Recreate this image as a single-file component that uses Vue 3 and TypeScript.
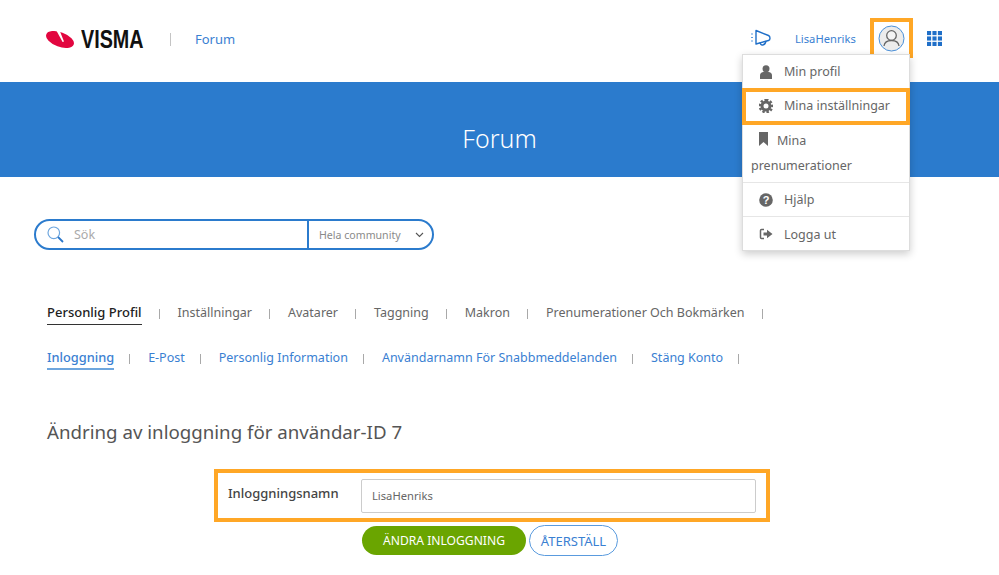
<script setup lang="ts">
const mainTabs: string[] = ['Inställningar', 'Avatarer', 'Taggning', 'Makron', 'Prenumerationer Och Bokmärken']
const subTabs: string[] = ['E-Post', 'Personlig Information', 'Användarnamn För Snabbmeddelanden', 'Stäng Konto']
</script>

<template>
  <div class="page">
    <header class="header">
      <div class="brand">
        <svg class="logo-mark" width="28" height="19" viewBox="0 0 28 19">
          <ellipse cx="14" cy="9.500" rx="14.600" ry="7.300" transform="rotate(20 14 9.500)" fill="#e2063f" />
          <path fill="#fff" d="M9.500 -1 13 -1 18 11.500 16.600 12Z" />
        </svg>
        <span class="logo-text">VISMA</span>
        <span class="brand-sep"></span>
        <span class="brand-link">Forum</span>
      </div>
      <div class="tools">
        <svg class="horn" width="21" height="18" viewBox="0 0 21 18" fill="none">
          <path stroke="#1f6fc8" stroke-width="1.400" stroke-linejoin="round" d="M6 1.500 18.500 6.500C20.500 7.500 20.500 11 18.500 11.500L6 15Z" />
          <path stroke="#1f6fc8" stroke-width="1.400" d="M10 13.500c.5 3.500 5 3.500 6-1.500" />
          <path stroke="#5b9ce0" stroke-width="1.200" d="M1 5h2M1 8.500h2M1 12h2" />
        </svg>
        <span class="user-name">LisaHenriks</span>
        <span class="avatar-box">
          <svg width="27" height="27" viewBox="0 0 27 27" fill="none">
            <circle cx="13.500" cy="13.500" r="12.500" fill="#ececec" stroke="#4a90d9" />
            <circle cx="13.500" cy="10.500" r="4.800" fill="#f4f4f4" stroke="#666" stroke-width="1.300" />
            <path stroke="#666" stroke-width="1.300" d="M6 21c.5-4 3.500-5.500 7.500-5.500S20.500 17 21 21" />
          </svg>
        </span>
        <svg class="grid-icon" width="15" height="15" viewBox="0 0 16 16" fill="#1f6fc8">
          <rect width="4.400" height="4.400" /><rect x="5.800" width="4.400" height="4.400" /><rect x="11.600" width="4.400" height="4.400" />
          <rect y="5.800" width="4.400" height="4.400" /><rect x="5.800" y="5.800" width="4.400" height="4.400" /><rect x="11.600" y="5.800" width="4.400" height="4.400" />
          <rect y="11.600" width="4.400" height="4.400" /><rect x="5.800" y="11.600" width="4.400" height="4.400" /><rect x="11.600" y="11.600" width="4.400" height="4.400" />
        </svg>
      </div>
    </header>

    <section class="hero">Forum</section>

    <main class="content">
      <div class="search">
        <div class="search-field">
          <svg width="17" height="17" viewBox="0 0 17 17" fill="none">
            <circle cx="6.800" cy="6.800" r="5.800" stroke="#6ea6de" stroke-width="1.200" />
            <path stroke="#2a76c9" stroke-width="1.800" d="M11 11l5 5" />
          </svg>
          <span class="search-text">Sök</span>
        </div>
        <div class="search-scope">
          <span>Hela community</span>
          <svg width="9" height="6" viewBox="0 0 9 6" fill="none"><path stroke="#555" stroke-width="1.100" d="M1 1l3.500 3.500L8 1" /></svg>
        </div>
      </div>

      <nav class="tabs tabs-main">
        <span class="tab tab-active-dark">Personlig Profil</span>
        <template v-for="t in mainTabs" :key="t">
          <span class="bar"></span>
          <span class="tab">{{ t }}</span>
        </template>
        <span class="bar"></span>
      </nav>

      <nav class="tabs tabs-sub">
        <span class="tab tab-active-blue">Inloggning</span>
        <template v-for="t in subTabs" :key="t">
          <span class="bar"></span>
          <span class="tab">{{ t }}</span>
        </template>
        <span class="bar"></span>
      </nav>

      <h2 class="title">Ändring av inloggning för användar-ID 7</h2>

      <div class="form-row">
        <label class="form-label">Inloggningsnamn</label>
        <div class="form-input">LisaHenriks</div>
      </div>
      <div class="actions">
        <button class="btn btn-green">ÄNDRA INLOGGNING</button>
        <button class="btn btn-outline">ÅTERSTÄLL</button>
      </div>
    </main>

    <div class="menu">
      <div class="item item-first">
        <svg width="14" height="14" viewBox="0 0 14 14" fill="#666"><circle cx="7" cy="3.800" r="3.500" /><path d="M1 14v-3.500C1 8.500 2.500 7 4.500 7h5C11.500 7 13 8.500 13 10.500V14Z" /></svg>
        <span>Min profil</span>
      </div>
      <div class="item item-hl">
        <svg width="14" height="14" viewBox="0 0 14 14"><circle cx="7" cy="7" r="4" fill="none" stroke="#666" stroke-width="3" /><path stroke="#666" stroke-width="2.400" stroke-dasharray="2.400 1.700" fill="none" d="M7 .8a6.200 6.200 0 1 1-.01 0Z" /></svg>
        <span>Mina inställningar</span>
      </div>
      <div class="item item-wrap">
        <svg width="10" height="14" viewBox="0 0 10 14" fill="#666"><path d="M0 0h9v14L4.500 10 0 14Z" /></svg>
        <span class="wrap-first">Mina</span>
        <div class="wrap-second">prenumerationer</div>
      </div>
      <div class="item with-line">
        <svg width="14" height="14" viewBox="0 0 14 14"><circle cx="7" cy="7" r="6.800" fill="#666" /><text x="7" y="11" text-anchor="middle" font-size="11" font-weight="700" font-family="Liberation Sans" fill="#fff">?</text></svg>
        <span>Hjälp</span>
      </div>
      <div class="item with-line">
        <svg width="14" height="14" viewBox="0 0 14 14" fill="none"><path stroke="#666" stroke-width="1.500" d="M5 2.500H2.500a1 1 0 0 0-1 1v7a1 1 0 0 0 1 1H5" /><path fill="#666" d="M4.500 5.500H8V2.800L13.500 7 8 11.200V8.500H4.500Z" /></svg>
        <span>Logga ut</span>
      </div>
    </div>
  </div>
</template>

<style scoped>
.page {
  position: relative;
  width: 999px;
  height: 575px;
  overflow: hidden;
  background: #fff;
  font-family: "Noto Sans", "Open Sans", sans-serif;
  font-size: 12.500px;
  color: #555;
}
.header {
  height: 82px;
  display: flex;
  align-items: center;
  justify-content: space-between;
  padding: 0 57px 6px 46px;
  box-sizing: border-box;
}
.brand { display: flex; align-items: center; padding-top: 2px; }
.logo-mark { display: block; }
.logo-text {
  display: block;
  margin-left: 7px;
  font-family: "Liberation Sans", sans-serif;
  font-weight: 700;
  font-size: 25px;
  line-height: 20px;
  color: #111;
  width: 64px;
  transform: scaleX(0.79);
  transform-origin: left center;
}
.brand-sep { width: 1px; height: 13px; background: #c4c4c4; margin-left: 25px; }
.brand-link { margin-left: 24px; color: #3a80d2; font-size: 13px; }
.tools { display: flex; align-items: center; }
.horn { margin-right: 24px; }
.user-name { color: #3a80d2; font-size: 11.200px; width: 60px; }
.avatar-box {
  box-sizing: border-box;
  width: 43px;
  height: 40px;
  margin-left: 15px;
  border: 4px solid #ffa726;
  display: flex;
  align-items: center;
  justify-content: center;
}
.grid-icon { margin-left: 14px; }
.hero {
  box-sizing: border-box;
  height: 95px;
  padding-top: 16px;
  background: #2b7bcd;
  color: #fff;
  display: flex;
  align-items: center;
  justify-content: center;
  font-size: 25px;
  font-weight: 300;
}
.content { padding: 42px 0 0 34px; }
.search {
  box-sizing: border-box;
  width: 399.500px;
  height: 31px;
  display: flex;
  border: 2px solid #2b7bcd;
  border-radius: 16px;
}
.search-field {
  box-sizing: border-box;
  width: 273px;
  display: flex;
  align-items: center;
  padding-left: 11px;
  border-right: 2px solid #2b7bcd;
}
.search-text { margin-left: 10px; color: #aaa; font-size: 12.500px; }
.search-scope {
  flex: 1;
  display: flex;
  align-items: center;
  justify-content: space-between;
  padding: 0 8px 0 10px;
  color: #8a8a8a;
  font-size: 10.600px;
}
.tabs { display: flex; align-items: center; padding-left: 13px; height: 25px; }
.tabs-main { margin-top: 50px; color: #666; }
.tabs-sub { margin-top: 20px; color: #3a80d2; }
.tab {
  display: flex;
  align-items: center;
  box-sizing: border-box;
  height: 25px;
  white-space: nowrap;
  border-bottom: 1px solid transparent;
}
.bar { width: 1px; height: 10px; background: #a9a9a9; margin: 2px 18px 0 17px; }
.tabs-sub .bar { margin: 2px 18px 0 15px; }
.tab-active-dark { color: #222; font-weight: 500; font-size: 13px; border-bottom-color: #333; }
.tab-active-blue { font-weight: 500; font-size: 12.800px; border-bottom: 2px solid #6ea6de; }
.title {
  margin: 49px 0 0 13px;
  font-size: 18.700px;
  line-height: 26px;
  font-weight: 400;
  color: #555;
}
.form-row {
  box-sizing: border-box;
  margin: 24px 0 0 180px;
  width: 556px;
  height: 53px;
  border: 4px solid #ffa726;
  display: flex;
  align-items: flex-start;
  padding: 6px 10px 0 10px;
}
.form-label { width: 133px; font-weight: 500; color: #444; font-size: 13px; padding-top: 5px; line-height: 18px; }
.form-input {
  box-sizing: border-box;
  width: 395px;
  height: 34px;
  border: 1px solid #ccc;
  border-radius: 2px;
  display: flex;
  align-items: center;
  padding: 0 0 2px 10px;
  font-size: 11.200px;
  color: #666;
}
.actions { display: flex; align-items: center; gap: 3px; margin: 3px 0 0 328px; }
.btn { font-family: inherit; border-radius: 16px; cursor: pointer; padding: 0; }
.btn-green { width: 164px; height: 29px; background: #6aa500; border: none; color: #fff; font-size: 12.100px; }
.btn-outline { width: 89px; height: 31px; background: #fff; border: 1px solid #5a9bde; color: #3a80d2; font-size: 13px; }
.menu {
  position: absolute;
  left: 742px;
  top: 54px;
  width: 168px;
  height: 197px;
  box-sizing: border-box;
  background: #fff;
  border: 1px solid #ddd;
  box-shadow: 0 3px 8px rgba(0, 0, 0, 0.2);
  font-size: 12.500px;
  color: #666;
}
.item {
  display: flex;
  align-items: center;
  gap: 11px;
  height: 34px;
  padding-left: 16px;
}
.item-first { height: 33px; }
.item-hl {
  box-sizing: border-box;
  height: 37px;
  width: 168px;
  margin-left: -1px;
  border: 4px solid #ffa726;
  padding: 0 0 2px 13px;
}
.item-wrap {
  height: 57px;
  position: relative;
  align-items: flex-start;
  padding-top: 7px;
  box-sizing: border-box;
  gap: 8px;
  padding-left: 16px;
}
.wrap-first { line-height: 18px; }
.wrap-second { position: absolute; left: 8px; top: 32px; line-height: 18px; }
.with-line { border-top: 1px solid #e6e6e6; box-sizing: border-box; }
.with-line:last-child { padding-top: 1px; }
</style>
